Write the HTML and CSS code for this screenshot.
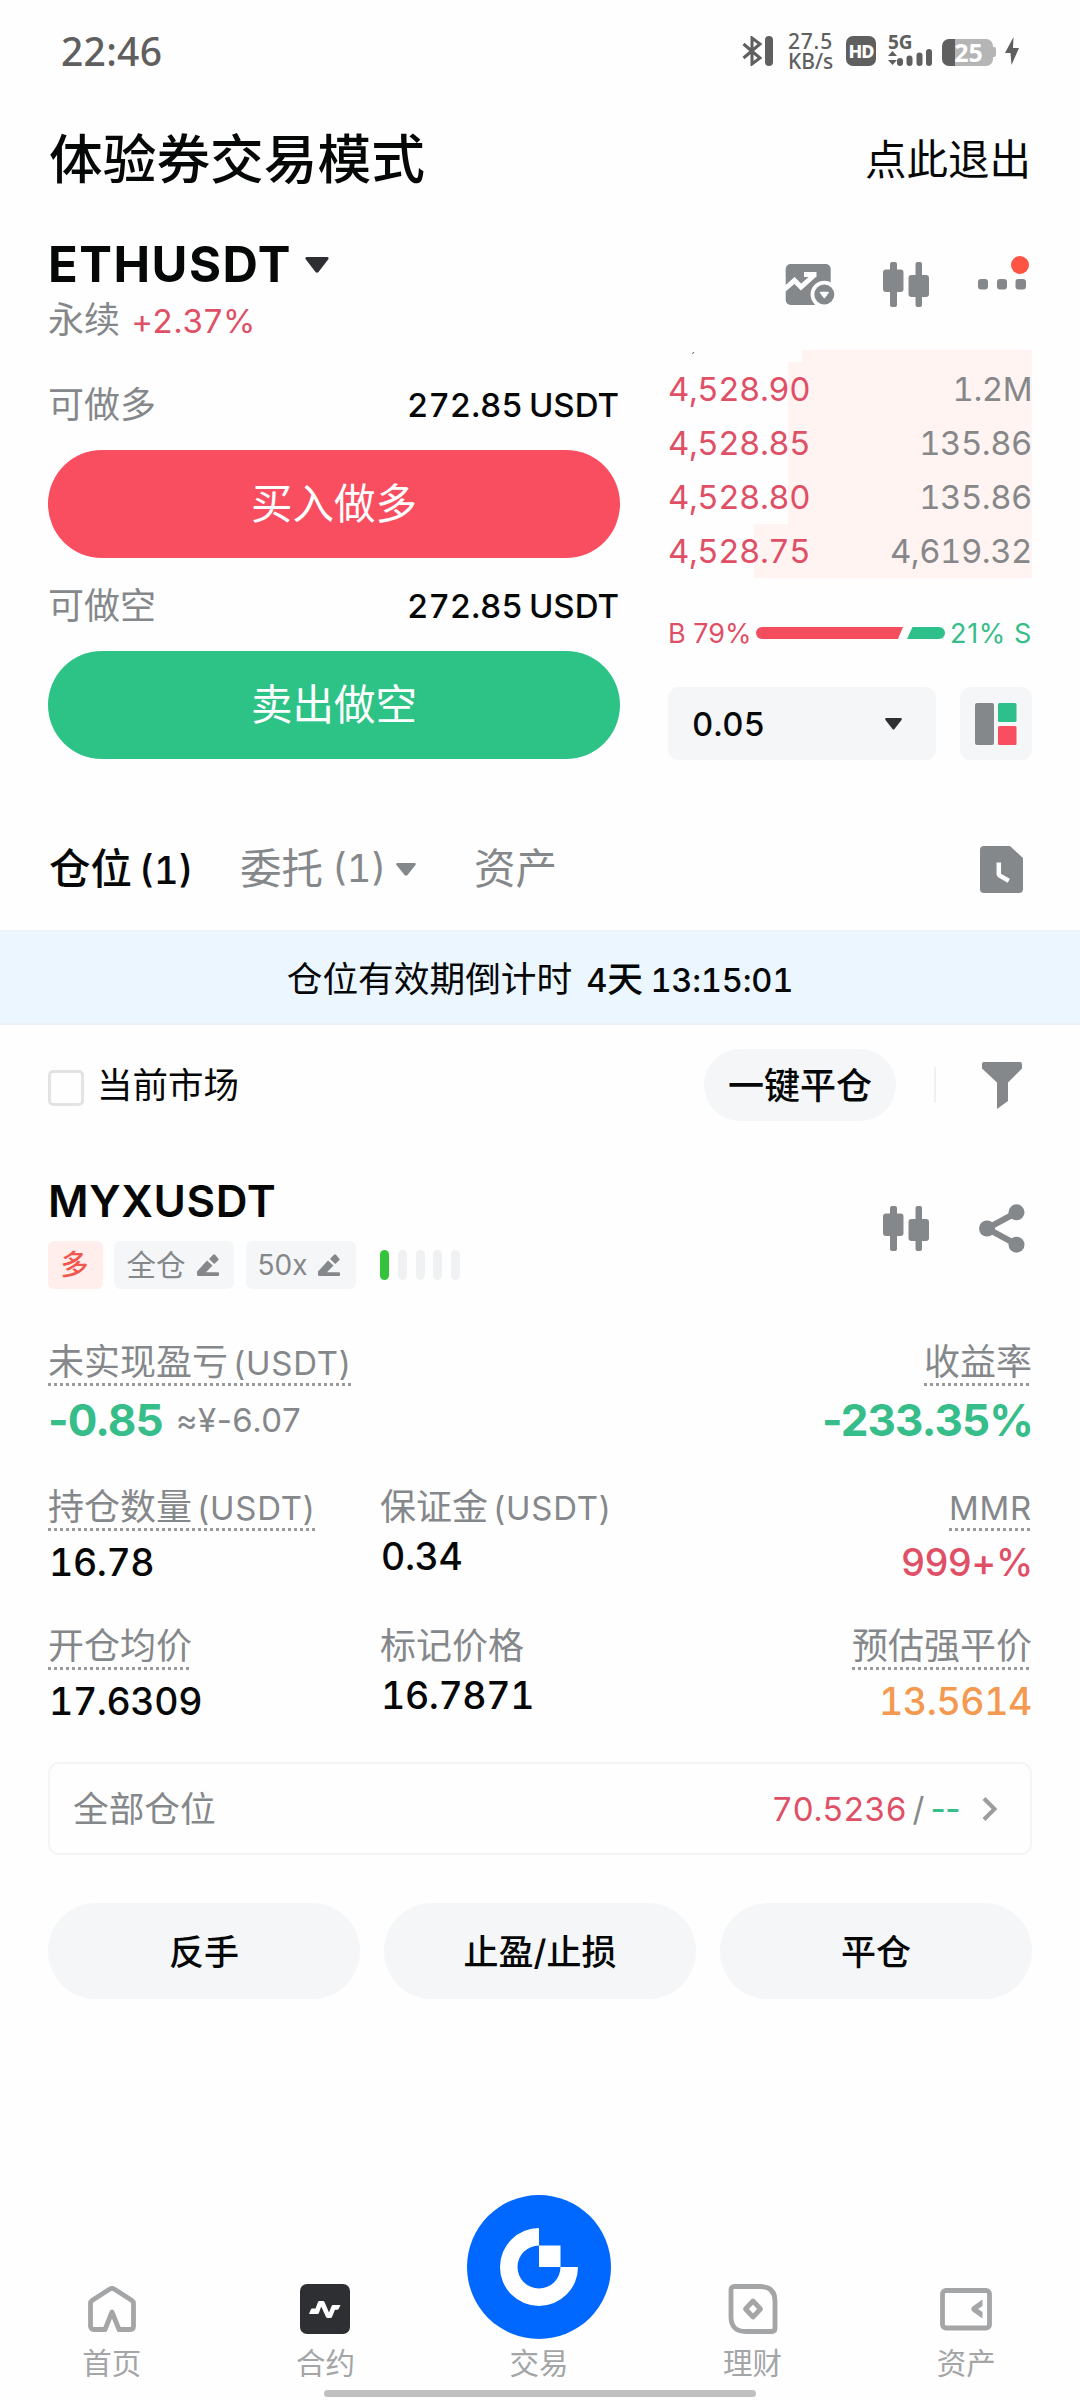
FILE: index.html
```html
<!DOCTYPE html>
<html lang="zh-CN">
<head>
<meta charset="utf-8">
<title>体验券交易模式</title>
<link rel="stylesheet" href="styles.css">
</head>
<body>
<svg class="defs" width="0" height="0">
  <symbol id="candles" viewBox="0 0 46 45"><rect x="7" width="7" height="45" rx="2"/><rect y="7.500" width="20.500" height="22.500" rx="3"/><rect x="32.500" width="6.500" height="45" rx="2"/><rect x="25.500" y="13" width="20.500" height="22" rx="3"/></symbol>
  <symbol id="pen" viewBox="0 0 22 22"><path d="M0 17.500 10 6.500 15.500 11.500 9 18.200H21q1 0 1 1V21q0 1-1 1H1.500Q0 22 0 20.500zM12 5 16 .8q1-1 2 0l3.200 3.600q.8 1 0 1.900L17.300 10z"/></symbol>
</svg>
<div class="page">
  <header class="status">
    <span class="time">22:46</span>
    <div class="status-icons">
      <svg class="bt" width="32" height="30" viewBox="0 0 32 30"><path d="M1.500 8 18 22l-8 6V2l8 6L1.500 22" fill="none" stroke="#5f5f5f" stroke-width="3"/><rect x="23" width="8" height="30" rx="4"/></svg>
      <div class="speed"><span>27.5</span><span>KB/s</span></div>
      <span class="hd">HD</span>
      <div class="signal"><span>5G</span>
        <svg width="44" height="17" viewBox="0 0 44 17"><path d="M0 7 4.500 2 9 7zM0 11h9l-4.500 5z"/><rect x="9" y="9" width="6" height="8" rx="3"/><rect x="18.500" y="6.500" width="6" height="10.500" rx="3"/><rect x="28.500" y="3.500" width="6" height="13.500" rx="3"/><rect x="38" y="0" width="6" height="17" rx="3"/></svg>
      </div>
      <span class="battery">25</span>
      <svg class="bolt" width="14" height="28" viewBox="0 0 14 28"><path d="M8.500 0 0 16h5.500L6.500 28 14 11H8z"/></svg>
    </div>
  </header>

  <div class="mode">
    <h1>体验券交易模式</h1>
    <span class="exit">点此退出</span>
  </div>

  <section class="pair">
    <div>
      <div class="pair-name"><b>ETHUSDT</b><svg width="24" height="16" viewBox="0 0 24 16"><path d="M2 0h20q2 0 1.500 2L13.500 15q-1.500 1.500-3 0L.5 2Q0 0 2 0z"/></svg></div>
      <div class="pair-sub">永续 <span class="n red">+2.37%</span></div>
    </div>
    <div class="tools">
      <svg class="t1" width="50" height="43" viewBox="0 0 50 43"><rect x=".7" y="1" width="45" height="41" rx="5"/><path d="M-2 27.500 9.500 17.500 16 24 30 11.500M19 11.500h12.500" fill="none" stroke="#fefefe" stroke-width="5"/><circle cx="39.300" cy="31.500" r="13.700" fill="#fefefe"/><circle cx="39.300" cy="31.500" r="10"/><path d="M35.500 29.500h7.600l-3.800 5z" fill="#fefefe" stroke="#fefefe" stroke-width="1.500" stroke-linejoin="round"/></svg>
      <svg class="t2" width="46" height="45"><use href="#candles"/></svg>
      <svg class="t3" width="52" height="34" viewBox="0 0 52 34"><rect y="23" width="10" height="10.500" rx="3"/><rect x="19" y="23" width="10" height="10.500" rx="3"/><rect x="37.500" y="23" width="10.500" height="10.500" rx="3"/><circle cx="42" cy="9" r="9" fill="#fd5443"/></svg>
    </div>
  </section>

  <section class="trade">
    <div class="order">
      <div class="avail"><span>可做多</span><b>272.85<i>USDT</i></b></div>
      <button class="buy">买入做多</button>
      <div class="avail second"><span>可做空</span><b>272.85<i>USDT</i></b></div>
      <button class="sell">卖出做空</button>
    </div>
    <div class="book">
      <div class="asks">
        <div class="ask cut" style="--depth:230px"><svg width="3" height="3" viewBox="0 0 3 3"><path d="M1 1h1.500L1 3H0z"/></svg></div>
        <div class="ask" style="--depth:244px"><span>4,528.90</span><em>1.2M</em></div>
        <div class="ask" style="--depth:244px"><span>4,528.85</span><em>135.86</em></div>
        <div class="ask" style="--depth:244px"><span>4,528.80</span><em>135.86</em></div>
        <div class="ask" style="--depth:278px"><span>4,528.75</span><em>4,619.32</em></div>
      </div>
      <div class="ratio"><span class="red">B 79%</span>
        <svg width="190" height="12" viewBox="0 0 190 12"><path d="M6 0H147L142 12H6A6 6 0 0 1 6 0z" fill="#f44e5e"/><path d="M156.500 0H183a6 6 0 0 1 0 12H151z" fill="#2dc08a"/></svg>
        <span class="green">21% S</span></div>
      <div class="precision">
        <div class="select"><span>0.05</span><svg width="17" height="12" viewBox="0 0 17 12"><path d="M1.500 0h14q2 0 1 2L9.500 11q-1 1-2 0L.5 2q-1-2 1-2z"/></svg></div>
        <div class="layout"><svg width="42" height="42" viewBox="0 0 42 42"><rect width="19" height="42" rx="2" fill="#85888b"/><rect x="23" width="18.500" height="19" rx="1.500" fill="#2dc08a"/><rect x="23" y="23" width="18.500" height="19" rx="1.500" fill="#f84e60"/></svg></div>
      </div>
    </div>
  </section>

  <nav class="tabs">
    <span class="tab on">仓位 <span class="n">(1)</span></span>
    <span class="tab t-orders">委托 <span class="n">(1)</span><svg width="20" height="13" viewBox="0 0 20 13"><path d="M1.500 0h17q2 0 1 2l-8 10q-1.500 1.500-3 0L.5 2q-1-2 1-2z"/></svg></span>
    <span class="tab">资产</span>
    <svg class="history" width="43" height="47" viewBox="0 0 43 47"><path d="M4 0h26l13 12v31a4 4 0 0 1-4 4H4a4 4 0 0 1-4-4V4a4 4 0 0 1 4-4z"/><path d="M18.800 16.500v11.500q0 1 1 1.700l9 5" fill="none" stroke="#fefefe" stroke-width="4.500"/></svg>
  </nav>

  <div class="countdown"><span>仓位有效期倒计时</span><b><span class="n">4</span>天 <span class="n">13:15:01</span></b></div>

  <div class="filter">
    <span class="check"></span><span class="market">当前市场</span>
    <button class="close-all">一键平仓</button>
    <span class="sep"></span>
    <svg width="40" height="47" viewBox="0 0 40 47"><path d="M2 0h36q2 0 2 2v4.500L26 20.500V39L15 47V20.500L0 6.500V2Q0 0 2 0z"/></svg>
  </div>

  <section class="position">
    <div class="pos-head">
      <div>
        <h2>MYXUSDT</h2>
        <div class="tags">
          <span class="tag long">多</span>
          <span class="tag cross">全仓<svg width="22" height="22"><use href="#pen"/></svg></span>
          <span class="tag lever"><span class="n">50x</span><svg width="22" height="22"><use href="#pen"/></svg></span>
          <span class="risk"><i class="lit"></i><i></i><i></i><i></i><i></i></span>
        </div>
      </div>
      <div class="pos-tools">
        <svg width="46" height="45"><use href="#candles"/></svg>
        <svg width="46" height="49" viewBox="0 0 46 49"><path d="M37.500 8.500 8 24.500l29.500 16" fill="none" stroke="#85888b" stroke-width="6"/><circle cx="8" cy="24.500" r="8"/><circle cx="37.500" cy="8.300" r="8"/><circle cx="37.500" cy="40.700" r="8"/></svg>
      </div>
    </div>

    <div class="pnl">
      <div><div class="label u">未实现盈亏 <span class="n">(USDT)</span></div>
        <div class="big"><b>-0.85</b><span>≈¥-6.07</span></div></div>
      <div class="end"><div class="label u">收益率</div><div class="big"><b>-233.35%</b></div></div>
    </div>
    <div class="stats">
      <div><div class="label u">持仓数量 <span class="n">(USDT)</span></div><div class="value">16.78</div></div>
      <div><div class="label">保证金 <span class="n">(USDT)</span></div><div class="value">0.34</div></div>
      <div class="end"><div class="label u"><span class="n">MMR</span></div><div class="value mmr red">999+%</div></div>
    </div>
    <div class="stats">
      <div><div class="label u">开仓均价</div><div class="value">17.6309</div></div>
      <div><div class="label">标记价格</div><div class="value">16.7871</div></div>
      <div class="end"><div class="label u">预估强平价</div><div class="value orange">13.5614</div></div>
    </div>

    <div class="all">
      <span>全部仓位</span>
      <span class="tpsl"><span class="red tp">70.5236</span><i>/</i><span class="green dashes">--</span></span>
      <svg width="16" height="24" viewBox="0 0 16 24"><path d="M2 1.500 12.500 12 2 22.500" fill="none" stroke="#9a9c9e" stroke-width="4"/></svg>
    </div>
    <div class="actions"><button>反手</button><button>止盈/止损</button><button>平仓</button></div>
  </section>

  <nav class="bottom">
    <div class="item"><svg width="50" height="50" viewBox="0 0 50 50"><path d="M22.500 5.200q2.500-1.700 5 0L45 16.500q1.500 1 1.500 3V42q0 3.500-3.500 3.500H32L25 28l-7 17.500H7Q3.500 45.500 3.500 42V19.500q0-2 1.500-3z" fill="none" stroke="#a3a5a7" stroke-width="4.800" stroke-linejoin="round"/></svg><span>首页</span></div>
    <div class="item"><svg width="50" height="50" viewBox="0 0 50 50"><rect width="50" height="50" rx="7" fill="#2e2f32"/><path d="M9 30l1.800-4.400q.5-1 1.600-1H15.500L18 18q.5-1 1.500-1H23q1 0 1.500 1L29 28.500l2.500-6.300q.5-1.200 1.500-1.200h7.500l-1.800 3.800q-.4.900-1.500.9H35L32 33q-.5 1-1.500 1h-3q-1 0-1.500-1L21.200 22.500 19 28.700q-.4 1.300-1.500 1.300z" fill="#fff"/></svg><span>合约</span></div>
    <div class="item main"><svg width="144" height="144" viewBox="0 0 144 144"><circle cx="72" cy="72" r="72" fill="#0068ff"/><path d="M72 33A39 39 0 1 0 111 72H93.500A21.500 21.500 0 1 1 72 50.500zM72 50.500H93.500V72H72z" fill="#fff"/></svg><span>交易</span></div>
    <div class="item"><svg width="50" height="50" viewBox="0 0 50 50"><g fill="none" stroke="#a3a5a7" stroke-width="4.800"><path d="M6.500 2.500H32Q47 2.500 47 17V44q0 3.500-3.500 3.500H18Q3 47.500 3 33V6q0-3.500 3.500-3.500z"/><path d="M25 17l7.500 8-7.500 8-7.500-8z" stroke-linejoin="round"/></g></svg><span>理财</span></div>
    <div class="item"><svg width="52" height="50" viewBox="0 0 52 50"><rect x="2.500" y="6.500" width="47" height="37.500" rx="3.500" fill="none" stroke="#a3a5a7" stroke-width="4.800"/><path d="M42.500 15.500V22L38 25l4.500 3v6.500l-10-7q-2.500-2.500 0-5z" fill="#a3a5a7"/></svg><span>资产</span></div>
    <i class="home-bar"></i>
  </nav>
</div>
</body>
</html>
```

FILE: styles.css
```css
* { box-sizing: border-box; margin: 0; padding: 0; }
body { background: #fefefe; }
.page {
  width: 1080px; height: 2400px; display: flex; flex-direction: column; overflow: hidden;
  font-family: Inter, "Noto Sans CJK SC", sans-serif; font-size: 36px; line-height: 36px;
  color: #060707;
}
svg { display: block; flex: none; }
.defs { position: absolute; }
i, em { font-style: normal; }
button { font: inherit; color: inherit; border: 0; display: block; }
.n { font-size: .915em; line-height: 1; }
.red { color: #df5067; }
.green { color: #36bd8a; }
.orange { color: #f4994f; }

/* status bar */
.status { height: 102px; padding: 0 61px; display: flex; justify-content: space-between; align-items: center; color: #5f5f5f; fill: #5f5f5f; font-family: "Noto Sans", sans-serif; }
.time { font-size: 39px; font-weight: 500; letter-spacing: .3px; }
.status-icons { display: flex; align-items: center; }
.speed { width: 44px; margin-left: 14px; font-size: 21px; line-height: 20px; font-weight: 500; display: flex; flex-direction: column; }
.speed span { height: 20px; }
.speed span:first-child { letter-spacing: .8px; }
.hd { width: 30px; height: 30px; margin-left: 14px; border-radius: 7px; background: #5f5f5f; color: #fff; font: 800 18px/30px "Noto Sans", sans-serif; text-align: center; letter-spacing: -1px; }
.signal { width: 44px; height: 30px; margin-left: 12px; display: flex; flex-direction: column; justify-content: space-between; }
.signal span { font-size: 19px; font-weight: 700; line-height: 13px; height: 13px; }
.battery { position: relative; width: 51px; height: 27px; margin: 2px 0 0 10px; border-radius: 7px; background: linear-gradient(90deg, #5f5f5f 13px, #b5b5b5 13px); color: #fff; font: 700 25px/27px "Noto Sans", sans-serif; text-align: center; padding-left: 2px; }
.battery::after { content: ""; position: absolute; left: 51px; top: 8px; width: 3px; height: 10px; background: #b5b5b5; border-radius: 0 2px 2px 0; }
.bolt { margin-left: 12px; }

/* mode header */
.mode { height: 114px; padding: 0 49px; display: flex; justify-content: space-between; align-items: center; }
h1 { font-size: 53.700px; line-height: 60px; font-weight: 500; padding-top: 2px; }
.exit { font-size: 41.500px; line-height: 50px; padding-top: 1px; }

/* pair */
.pair { height: 134px; padding: 18px 48px 0; display: flex; justify-content: space-between; }
.pair-name { display: flex; align-items: center; height: 60px; padding-top: 1px; font-size: 49px; line-height: 60px; fill: #2e2f32; }
.pair-name b { font-weight: 700; letter-spacing: 1.500px; }
.pair-name svg { margin-left: 13px; }
.pair-sub { line-height: 53px; color: #85888b; }
.pair-sub .n { margin-left: 1px; letter-spacing: .7px; }
.tools { display: flex; fill: #85888b; padding-top: 22px; }
.t1 { margin: 7px 48px 0 0; }
.t2 { margin: 6px 49px 0 0; }
.t3 { margin-right: 2px; }

/* trade panel */
.trade { display: flex; justify-content: space-between; height: 409px; padding: 0 48px; }
.order { width: 572px; padding-top: 25px; }
.avail { height: 60px; margin-bottom: 15px; padding-right: 1px; display: flex; justify-content: space-between; align-items: center; }
.avail.second { margin-top: 18px; }
.avail span { color: #85888b; }
.avail b { font-size: 33px; font-weight: 500; font-feature-settings: "tnum"; }
.avail b i { margin-left: 6px; }
.buy, .sell { width: 572px; height: 108px; border-radius: 54px; color: #fff; font-size: 41.500px; line-height: 108px; }
.buy { background: #f84e60; }
.sell { background: #2dc286; }
.book { width: 364px; }
.asks { height: 228px; font-size: 33px; font-feature-settings: "tnum"; letter-spacing: -.5px; }
.ask { height: 54px; display: flex; justify-content: space-between; align-items: center; background: linear-gradient(#fff4f2, #fff4f2) right / var(--depth) 100% no-repeat; }
.ask.cut { height: 12px; align-items: flex-start; padding: 1px 0 0 24px; fill: #77797b; }
.ask span { color: #df5067; }
.ask em { color: #868789; }
.ratio { height: 109px; display: flex; align-items: center; font-size: 27px; white-space: nowrap; }
.ratio span { padding-top: 2px; }
.ratio span:first-child { width: 88px; }
.ratio span:last-child { margin-left: auto; letter-spacing: .6px; }
.precision { display: flex; justify-content: space-between; }
.select, .layout { height: 73px; border-radius: 11px; background: #f4f6f8; display: flex; align-items: center; }
.select { width: 268px; padding: 0 34px 0 24px; justify-content: space-between; font-size: 33px; font-weight: 500; font-feature-settings: "tnum"; fill: #2e2f32; }
.layout { width: 72px; justify-content: center; }

/* tabs */
.tabs { height: 171px; padding: 49px 57px 0 49px; display: flex; align-items: center; fill: #85888b; }
.tab { font-size: 41.500px; line-height: 50px; color: #85888b; white-space: nowrap; word-spacing: -4px; }
.tab .n { font-feature-settings: "tnum"; }
.tab.on { width: 191px; color: #060707; font-weight: 500; }
.t-orders { width: 234px; display: flex; align-items: center; }
.t-orders .n { margin-left: 9px; }
.t-orders svg { margin-left: 10px; }
.history { margin-left: auto; }

.countdown { height: 95px; padding-top: 3px; background: #ebf6ff; border: solid #edf2f7; border-width: 2px 0; display: flex; justify-content: center; align-items: center; gap: 14px; font-size: 35.700px; }
.countdown b { font-weight: 500; word-spacing: -2px; }
.countdown .n { font-feature-settings: "tnum"; letter-spacing: -.2px; }

.filter { height: 120px; padding: 0 58px 0 48px; display: flex; align-items: center; fill: #85888b; }
.check { width: 36px; height: 36px; margin: 5px 13px 0 0; border: 3px solid #e2e3e4; border-radius: 5px; }
.market { font-size: 35.500px; padding-top: 2px; }
.close-all { width: 192px; height: 72px; margin-left: auto; border-radius: 36px; background: #f4f6f8; font-weight: 500; line-height: 74px; }
.sep { width: 2px; height: 36px; margin: 0 46px 0 38px; background: #f0f1f2; }

/* position */
.position { padding: 31px 48px 0; }
.pos-head { display: flex; justify-content: space-between; height: 168px; }
h2 { font-size: 44px; line-height: 50px; font-weight: 600; margin-bottom: 15px; letter-spacing: .6px; }
.tags { display: flex; height: 48px; color: #85888b; fill: #85888b; }
.tag { height: 48px; line-height: 48px; border-radius: 6px; background: #f4f6f8; font-size: 29.500px; display: flex; align-items: center; justify-content: center; }
.tag svg { margin-left: 11px; }
.tag .n { font-size: 28px; line-height: 48px; }
.long { width: 55px; padding-right: 2px; background: #ffeeec; color: #f0584e; font-size: 28px; font-weight: 500; }
.cross { width: 120px; margin-left: 11px; padding-right: 3px; }
.lever { width: 110px; margin-left: 12px; padding-right: 4px; }
.risk { margin-left: 24px; display: flex; align-items: center; gap: 8.800px; }
.risk i { width: 9px; height: 30px; border-radius: 5px; background: #eff1f2; }
.risk .lit { background: #34c33c; }
.pos-tools { display: flex; gap: 50px; padding-top: 28px; margin-right: 7px; fill: #85888b; }
.pos-tools svg:first-child { margin-top: 2px; }

.label { color: #85888b; line-height: 36px; margin-bottom: 12px; width: max-content; white-space: nowrap; word-spacing: -5px; }
.label .n { letter-spacing: .8px; }
.label.u { padding-bottom: 6px; background: repeating-linear-gradient(90deg, #989a9c 0 3px, transparent 3px 6px) bottom / 100% 3px no-repeat; }
.end { display: flex; flex-direction: column; align-items: flex-end; }
.pnl { display: flex; justify-content: space-between; margin-bottom: 47px; }
.big { height: 44px; line-height: 44px; font-size: 44px; display: flex; color: #85888b; }
.big b { color: #36bd8a; font-weight: 700; letter-spacing: -.9px; }
.end .big b { margin-right: -1px; }
.big span { font-size: 33px; margin-left: 13px; letter-spacing: .5px; }
.stats { display: grid; grid-template-columns: 332px 332px 1fr; height: 94px; margin-bottom: 45px; }
.value { font-size: 37.500px; line-height: 39px; font-weight: 500; font-feature-settings: "tnum"; letter-spacing: -.4px; padding-left: 1px; }
.value.mmr { font-feature-settings: normal; letter-spacing: -.3px; margin-right: -1px; }

.all { height: 93px; margin-top: -5px; padding: 1px 32px 0 23px; border: 2px solid #f4f5f6; border-radius: 11px; display: flex; align-items: center; color: #85888b; font-size: 35.700px; }
.tpsl { margin-left: auto; font-size: 33px; }
.tpsl i { margin: 0 6px; }
.tp { font-feature-settings: "tnum"; letter-spacing: -.3px; }
.dashes { font-weight: 500; letter-spacing: -.5px; }
.all svg { margin-left: 22px; }
.actions { display: grid; grid-template-columns: repeat(3, 312px); gap: 24px; margin-top: 48px; }
.actions button { height: 96px; line-height: 98px; border-radius: 48px; background: #f4f6f8; font-weight: 500; font-size: 35px; }

/* bottom navigation */
.bottom { position: relative; height: 161px; margin-top: auto; padding: 0 7px 0 5px; display: grid; grid-template-columns: repeat(5, 1fr); }
.item { padding-top: 45px; display: flex; flex-direction: column; align-items: center; color: #a3a5a7; font-size: 29.500px; line-height: 58px; }
.item.main { margin-top: -44px; padding-top: 0; line-height: 48px; }
.home-bar { position: absolute; left: 324px; top: 151px; width: 432px; height: 7px; border-radius: 4px; background: #c0c0c0; }
```
